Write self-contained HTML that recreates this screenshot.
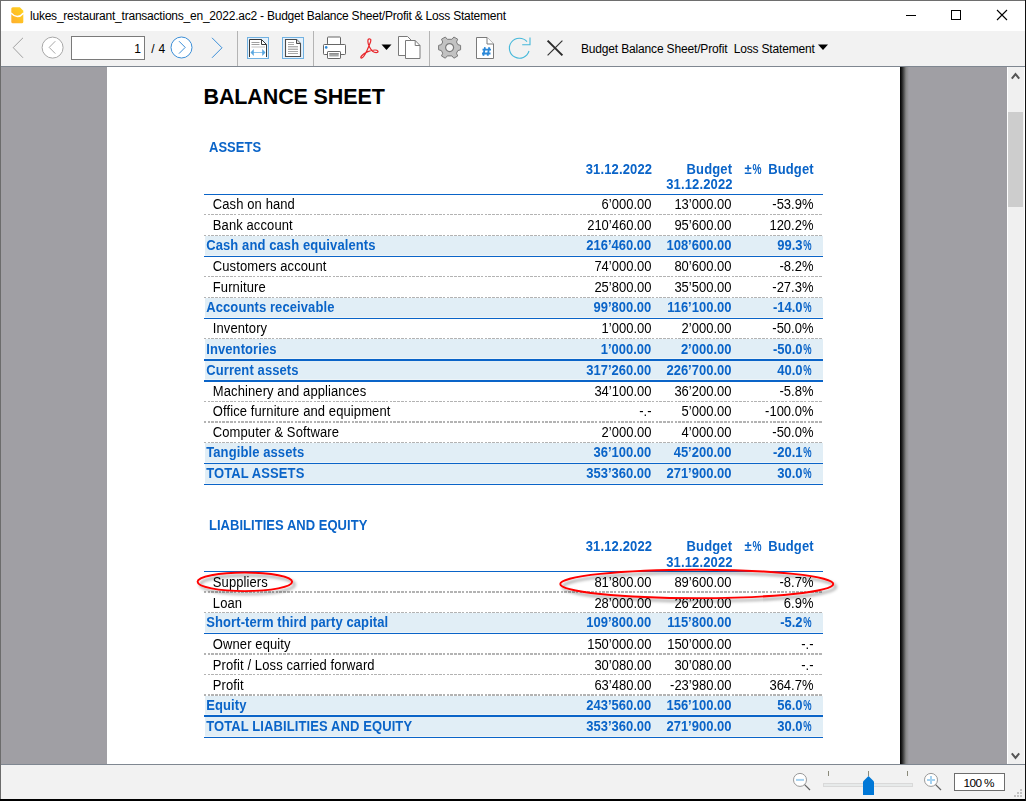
<!DOCTYPE html>
<html><head><meta charset="utf-8">
<style>
html,body{margin:0;padding:0;}
body{width:1026px;height:801px;position:relative;overflow:hidden;background:#000;font-family:"Liberation Sans",sans-serif;}
.t{position:absolute;white-space:pre;}
.dot{position:absolute;left:204px;width:619px;background:repeating-linear-gradient(to right,#b3b3b3 0px 2px,transparent 2px 3px,#b3b3b3 3px 6px,transparent 6px 7px,#b3b3b3 7px 10px,transparent 10px 11px,#b3b3b3 11px 14px,transparent 14px 15px,#b3b3b3 15px 17px,transparent 17px 19px);background-position:15px 0;}
</style></head><body>
<div id="win" style="position:absolute;left:0;top:0;width:1026px;height:799px;background:#fff;">
 <div style="position:absolute;left:0;top:0;width:1026px;height:1px;background:#6e6e6e"></div>
 <div style="position:absolute;left:0;top:0;width:1px;height:799px;background:#6c6c6c"></div>
 <div style="position:absolute;left:1025px;top:0;width:1px;height:801px;background:#111"></div>
 <div class="t" style="left:30px;top:8px;font-size:12px;letter-spacing:-0.225px;line-height:16px;color:#000;">lukes_restaurant_transactions_en_2022.ac2 - Budget Balance Sheet/Profit &amp; Loss Statement</div>
 <!-- toolbar -->
 <div style="position:absolute;left:1px;top:31px;width:1024px;height:35px;background:#f2f2f2"></div>
 <div style="position:absolute;left:1px;top:66px;width:1024px;height:1px;background:#7f8791"></div>
 <div style="position:absolute;left:71px;top:36px;width:74px;height:24px;box-sizing:border-box;border:1px solid #7a7a7a;background:#fff"></div>
 <div class="t" style="right:885.2px;top:42px;font-size:12px;line-height:15px;color:#000;">1</div>
 <div class="t" style="left:151.3px;top:42px;font-size:12px;letter-spacing:0.3px;line-height:15px;color:#000;">/ 4</div>
 <div class="t" style="left:581px;top:42px;font-size:12px;letter-spacing:-0.165px;line-height:15px;color:#000;">Budget Balance Sheet/Profit  Loss Statement</div>
 <!-- workspace -->
 <div style="position:absolute;left:1px;top:67px;width:1006px;height:697px;background:#a09fa4"></div>
 <div style="position:absolute;left:1007px;top:67px;width:1px;height:697px;background:#fff"></div>
 <div style="position:absolute;left:1008px;top:67px;width:16px;height:697px;background:#f0f0f0"></div>
 <div style="position:absolute;left:1008px;top:112px;width:15px;height:95px;background:#cdcdcd"></div>
 <div style="position:absolute;left:900px;top:67px;width:9px;height:697px;background:linear-gradient(to right,#000 0,#222 2px,#555 4px,#888 6px,#a09fa4 9px)"></div>
 <div id="page" style="position:absolute;left:107px;top:67px;width:793px;height:697px;background:#fff;overflow:hidden"></div>
 <div style="position:absolute;left:0;top:0;width:1026px;height:801px;">
<div class="t" style="left:203.5px;top:83.55px;font-size:21.5px;line-height:26px;font-weight:700;color:#000;letter-spacing:-0.12px;">BALANCE SHEET</div>
<div class="t" style="left:209px;top:139.50px;font-size:13px;line-height:16px;font-weight:700;color:#0a64c8;transform:scaleY(1.08);transform-origin:0 12.50px;letter-spacing:0.03px">ASSETS</div>
<div class="t" style="right:373.79999999999995px;top:161.50px;font-size:13px;line-height:16px;font-weight:700;color:#0a64c8;transform:scaleY(1.08);transform-origin:0 12.50px;letter-spacing:0.15px">31.12.2022</div>
<div class="t" style="right:293.79999999999995px;top:161.50px;font-size:13px;line-height:16px;font-weight:700;color:#0a64c8;transform:scaleY(1.08);transform-origin:0 12.50px;letter-spacing:0.15px">Budget</div>
<div class="t" style="right:293.29999999999995px;top:176.50px;font-size:13px;line-height:16px;font-weight:700;color:#0a64c8;transform:scaleY(1.08);transform-origin:0 12.50px;letter-spacing:0.15px">31.12.2022</div>
<div class="t" style="right:264px;top:161.50px;font-size:13px;line-height:16px;font-weight:700;color:#0a64c8;transform:scaleY(1.08);transform-origin:0 12.50px;">±<span style="display:inline-block;transform:scaleX(0.78);transform-origin:100% 50%;margin-left:-1.2px">%</span></div>
<div class="t" style="right:212.20000000000005px;top:161.50px;font-size:13px;line-height:16px;font-weight:700;color:#0a64c8;transform:scaleY(1.08);transform-origin:0 12.50px;letter-spacing:0.15px">Budget</div>
<div style="position:absolute;left:205px;width:618px;top:236px;height:20px;background:linear-gradient(to bottom,#e1eef6 0,#e1eef6 calc(100% - 1px),#edf4f8 calc(100% - 1px))"></div>
<div style="position:absolute;left:205px;width:618px;top:298px;height:20px;background:linear-gradient(to bottom,#e1eef6 0,#e1eef6 calc(100% - 1px),#edf4f8 calc(100% - 1px))"></div>
<div style="position:absolute;left:205px;width:618px;top:339px;height:20px;background:linear-gradient(to bottom,#e1eef6 0,#e1eef6 calc(100% - 1px),#edf4f8 calc(100% - 1px))"></div>
<div style="position:absolute;left:205px;width:618px;top:361px;height:19px;background:linear-gradient(to bottom,#e1eef6 0,#e1eef6 calc(100% - 1px),#edf4f8 calc(100% - 1px))"></div>
<div style="position:absolute;left:205px;width:618px;top:443px;height:20px;background:linear-gradient(to bottom,#e1eef6 0,#e1eef6 calc(100% - 1px),#edf4f8 calc(100% - 1px))"></div>
<div style="position:absolute;left:205px;width:618px;top:464px;height:20px;background:linear-gradient(to bottom,#e1eef6 0,#e1eef6 calc(100% - 1px),#edf4f8 calc(100% - 1px))"></div>
<div style="position:absolute;left:204px;width:619px;top:194px;height:1px;background:#0a64c8"></div>
<div class="dot" style="top:214px;height:1px"></div>
<div class="dot" style="top:235px;height:1px"></div>
<div style="position:absolute;left:204px;width:619px;top:256px;height:1px;background:#0a64c8"></div>
<div class="dot" style="top:276px;height:1px"></div>
<div class="dot" style="top:297px;height:1px"></div>
<div style="position:absolute;left:204px;width:619px;top:318px;height:1px;background:#0a64c8"></div>
<div class="dot" style="top:338px;height:1px"></div>
<div style="position:absolute;left:204px;width:619px;top:359px;height:2px;background:#0a64c8"></div>
<div style="position:absolute;left:204px;width:619px;top:380px;height:2px;background:#0a64c8"></div>
<div class="dot" style="top:401px;height:1px"></div>
<div class="dot" style="top:421px;height:2px"></div>
<div class="dot" style="top:442px;height:1px"></div>
<div style="position:absolute;left:204px;width:619px;top:463px;height:1px;background:#0a64c8"></div>
<div style="position:absolute;left:204px;width:619px;top:484px;height:1px;background:#0a64c8"></div>
<div class="t" style="left:212.8px;top:196.50px;font-size:13px;line-height:16px;font-weight:400;color:#000;transform:scaleY(1.08);transform-origin:0 12.50px;letter-spacing:0.1px">Cash on hand</div>
<div class="t" style="right:374.5px;top:196.50px;font-size:13px;line-height:16px;font-weight:400;color:#000;transform:scaleY(1.08);transform-origin:0 12.50px;letter-spacing:0px">6’000.00</div>
<div class="t" style="right:294.5px;top:196.50px;font-size:13px;line-height:16px;font-weight:400;color:#000;transform:scaleY(1.08);transform-origin:0 12.50px;letter-spacing:0px">13’000.00</div>
<div class="t" style="right:212.5px;top:196.50px;font-size:13px;line-height:16px;font-weight:400;color:#000;transform:scaleY(1.08);transform-origin:0 12.50px;letter-spacing:0px">-53.9%</div>
<div class="t" style="left:212.8px;top:217.50px;font-size:13px;line-height:16px;font-weight:400;color:#000;transform:scaleY(1.08);transform-origin:0 12.50px;letter-spacing:0.1px">Bank account</div>
<div class="t" style="right:374.5px;top:217.50px;font-size:13px;line-height:16px;font-weight:400;color:#000;transform:scaleY(1.08);transform-origin:0 12.50px;letter-spacing:0px">210’460.00</div>
<div class="t" style="right:294.5px;top:217.50px;font-size:13px;line-height:16px;font-weight:400;color:#000;transform:scaleY(1.08);transform-origin:0 12.50px;letter-spacing:0px">95’600.00</div>
<div class="t" style="right:212.5px;top:217.50px;font-size:13px;line-height:16px;font-weight:400;color:#000;transform:scaleY(1.08);transform-origin:0 12.50px;letter-spacing:0px">120.2%</div>
<div class="t" style="left:206.2px;top:237.50px;font-size:13px;line-height:16px;font-weight:700;color:#0a64c8;transform:scaleY(1.08);transform-origin:0 12.50px;letter-spacing:0.1px">Cash and cash equivalents</div>
<div class="t" style="right:374.70000000000005px;top:237.50px;font-size:13px;line-height:16px;font-weight:700;color:#0a64c8;transform:scaleY(1.08);transform-origin:0 12.50px;letter-spacing:0px">216’460.00</div>
<div class="t" style="right:294.5px;top:237.50px;font-size:13px;line-height:16px;font-weight:700;color:#0a64c8;transform:scaleY(1.08);transform-origin:0 12.50px;letter-spacing:0px">108’600.00</div>
<div class="t" style="right:214.5px;top:237.50px;font-size:13px;line-height:16px;font-weight:700;color:#0a64c8;transform:scaleY(1.08);transform-origin:0 12.50px;letter-spacing:0px">99.3<span style="display:inline-block;transform:scaleX(0.72);transform-origin:100% 50%;margin-left:-2.6px">%</span></div>
<div class="t" style="left:212.8px;top:258.50px;font-size:13px;line-height:16px;font-weight:400;color:#000;transform:scaleY(1.08);transform-origin:0 12.50px;letter-spacing:0.1px">Customers account</div>
<div class="t" style="right:374.5px;top:258.50px;font-size:13px;line-height:16px;font-weight:400;color:#000;transform:scaleY(1.08);transform-origin:0 12.50px;letter-spacing:0px">74’000.00</div>
<div class="t" style="right:294.5px;top:258.50px;font-size:13px;line-height:16px;font-weight:400;color:#000;transform:scaleY(1.08);transform-origin:0 12.50px;letter-spacing:0px">80’600.00</div>
<div class="t" style="right:212.5px;top:258.50px;font-size:13px;line-height:16px;font-weight:400;color:#000;transform:scaleY(1.08);transform-origin:0 12.50px;letter-spacing:0px">-8.2%</div>
<div class="t" style="left:212.8px;top:279.50px;font-size:13px;line-height:16px;font-weight:400;color:#000;transform:scaleY(1.08);transform-origin:0 12.50px;letter-spacing:0.1px">Furniture</div>
<div class="t" style="right:374.5px;top:279.50px;font-size:13px;line-height:16px;font-weight:400;color:#000;transform:scaleY(1.08);transform-origin:0 12.50px;letter-spacing:0px">25’800.00</div>
<div class="t" style="right:294.5px;top:279.50px;font-size:13px;line-height:16px;font-weight:400;color:#000;transform:scaleY(1.08);transform-origin:0 12.50px;letter-spacing:0px">35’500.00</div>
<div class="t" style="right:212.5px;top:279.50px;font-size:13px;line-height:16px;font-weight:400;color:#000;transform:scaleY(1.08);transform-origin:0 12.50px;letter-spacing:0px">-27.3%</div>
<div class="t" style="left:206.2px;top:299.50px;font-size:13px;line-height:16px;font-weight:700;color:#0a64c8;transform:scaleY(1.08);transform-origin:0 12.50px;letter-spacing:0.1px">Accounts receivable</div>
<div class="t" style="right:374.70000000000005px;top:299.50px;font-size:13px;line-height:16px;font-weight:700;color:#0a64c8;transform:scaleY(1.08);transform-origin:0 12.50px;letter-spacing:0px">99’800.00</div>
<div class="t" style="right:294.5px;top:299.50px;font-size:13px;line-height:16px;font-weight:700;color:#0a64c8;transform:scaleY(1.08);transform-origin:0 12.50px;letter-spacing:0px">116’100.00</div>
<div class="t" style="right:214.5px;top:299.50px;font-size:13px;line-height:16px;font-weight:700;color:#0a64c8;transform:scaleY(1.08);transform-origin:0 12.50px;letter-spacing:0px">-14.0<span style="display:inline-block;transform:scaleX(0.72);transform-origin:100% 50%;margin-left:-2.6px">%</span></div>
<div class="t" style="left:212.8px;top:320.50px;font-size:13px;line-height:16px;font-weight:400;color:#000;transform:scaleY(1.08);transform-origin:0 12.50px;letter-spacing:0.1px">Inventory</div>
<div class="t" style="right:374.5px;top:320.50px;font-size:13px;line-height:16px;font-weight:400;color:#000;transform:scaleY(1.08);transform-origin:0 12.50px;letter-spacing:0px">1’000.00</div>
<div class="t" style="right:294.5px;top:320.50px;font-size:13px;line-height:16px;font-weight:400;color:#000;transform:scaleY(1.08);transform-origin:0 12.50px;letter-spacing:0px">2’000.00</div>
<div class="t" style="right:212.5px;top:320.50px;font-size:13px;line-height:16px;font-weight:400;color:#000;transform:scaleY(1.08);transform-origin:0 12.50px;letter-spacing:0px">-50.0%</div>
<div class="t" style="left:206.2px;top:341.50px;font-size:13px;line-height:16px;font-weight:700;color:#0a64c8;transform:scaleY(1.08);transform-origin:0 12.50px;letter-spacing:0.1px">Inventories</div>
<div class="t" style="right:374.70000000000005px;top:341.50px;font-size:13px;line-height:16px;font-weight:700;color:#0a64c8;transform:scaleY(1.08);transform-origin:0 12.50px;letter-spacing:0px">1’000.00</div>
<div class="t" style="right:294.5px;top:341.50px;font-size:13px;line-height:16px;font-weight:700;color:#0a64c8;transform:scaleY(1.08);transform-origin:0 12.50px;letter-spacing:0px">2’000.00</div>
<div class="t" style="right:214.5px;top:341.50px;font-size:13px;line-height:16px;font-weight:700;color:#0a64c8;transform:scaleY(1.08);transform-origin:0 12.50px;letter-spacing:0px">-50.0<span style="display:inline-block;transform:scaleX(0.72);transform-origin:100% 50%;margin-left:-2.6px">%</span></div>
<div class="t" style="left:206.2px;top:362.50px;font-size:13px;line-height:16px;font-weight:700;color:#0a64c8;transform:scaleY(1.08);transform-origin:0 12.50px;letter-spacing:0.1px">Current assets</div>
<div class="t" style="right:374.70000000000005px;top:362.50px;font-size:13px;line-height:16px;font-weight:700;color:#0a64c8;transform:scaleY(1.08);transform-origin:0 12.50px;letter-spacing:0px">317’260.00</div>
<div class="t" style="right:294.5px;top:362.50px;font-size:13px;line-height:16px;font-weight:700;color:#0a64c8;transform:scaleY(1.08);transform-origin:0 12.50px;letter-spacing:0px">226’700.00</div>
<div class="t" style="right:214.5px;top:362.50px;font-size:13px;line-height:16px;font-weight:700;color:#0a64c8;transform:scaleY(1.08);transform-origin:0 12.50px;letter-spacing:0px">40.0<span style="display:inline-block;transform:scaleX(0.72);transform-origin:100% 50%;margin-left:-2.6px">%</span></div>
<div class="t" style="left:212.8px;top:383.50px;font-size:13px;line-height:16px;font-weight:400;color:#000;transform:scaleY(1.08);transform-origin:0 12.50px;letter-spacing:0.1px">Machinery and appliances</div>
<div class="t" style="right:374.5px;top:383.50px;font-size:13px;line-height:16px;font-weight:400;color:#000;transform:scaleY(1.08);transform-origin:0 12.50px;letter-spacing:0px">34’100.00</div>
<div class="t" style="right:294.5px;top:383.50px;font-size:13px;line-height:16px;font-weight:400;color:#000;transform:scaleY(1.08);transform-origin:0 12.50px;letter-spacing:0px">36’200.00</div>
<div class="t" style="right:212.5px;top:383.50px;font-size:13px;line-height:16px;font-weight:400;color:#000;transform:scaleY(1.08);transform-origin:0 12.50px;letter-spacing:0px">-5.8%</div>
<div class="t" style="left:212.8px;top:403.50px;font-size:13px;line-height:16px;font-weight:400;color:#000;transform:scaleY(1.08);transform-origin:0 12.50px;letter-spacing:0.1px">Office furniture and equipment</div>
<div class="t" style="right:374.5px;top:403.50px;font-size:13px;line-height:16px;font-weight:400;color:#000;transform:scaleY(1.08);transform-origin:0 12.50px;letter-spacing:0px">-.-</div>
<div class="t" style="right:294.5px;top:403.50px;font-size:13px;line-height:16px;font-weight:400;color:#000;transform:scaleY(1.08);transform-origin:0 12.50px;letter-spacing:0px">5’000.00</div>
<div class="t" style="right:212.5px;top:403.50px;font-size:13px;line-height:16px;font-weight:400;color:#000;transform:scaleY(1.08);transform-origin:0 12.50px;letter-spacing:0px">-100.0%</div>
<div class="t" style="left:212.8px;top:424.50px;font-size:13px;line-height:16px;font-weight:400;color:#000;transform:scaleY(1.08);transform-origin:0 12.50px;letter-spacing:0.1px">Computer &amp; Software</div>
<div class="t" style="right:374.5px;top:424.50px;font-size:13px;line-height:16px;font-weight:400;color:#000;transform:scaleY(1.08);transform-origin:0 12.50px;letter-spacing:0px">2’000.00</div>
<div class="t" style="right:294.5px;top:424.50px;font-size:13px;line-height:16px;font-weight:400;color:#000;transform:scaleY(1.08);transform-origin:0 12.50px;letter-spacing:0px">4’000.00</div>
<div class="t" style="right:212.5px;top:424.50px;font-size:13px;line-height:16px;font-weight:400;color:#000;transform:scaleY(1.08);transform-origin:0 12.50px;letter-spacing:0px">-50.0%</div>
<div class="t" style="left:206.2px;top:444.50px;font-size:13px;line-height:16px;font-weight:700;color:#0a64c8;transform:scaleY(1.08);transform-origin:0 12.50px;letter-spacing:0.1px">Tangible assets</div>
<div class="t" style="right:374.70000000000005px;top:444.50px;font-size:13px;line-height:16px;font-weight:700;color:#0a64c8;transform:scaleY(1.08);transform-origin:0 12.50px;letter-spacing:0px">36’100.00</div>
<div class="t" style="right:294.5px;top:444.50px;font-size:13px;line-height:16px;font-weight:700;color:#0a64c8;transform:scaleY(1.08);transform-origin:0 12.50px;letter-spacing:0px">45’200.00</div>
<div class="t" style="right:214.5px;top:444.50px;font-size:13px;line-height:16px;font-weight:700;color:#0a64c8;transform:scaleY(1.08);transform-origin:0 12.50px;letter-spacing:0px">-20.1<span style="display:inline-block;transform:scaleX(0.72);transform-origin:100% 50%;margin-left:-2.6px">%</span></div>
<div class="t" style="left:206.2px;top:465.50px;font-size:13px;line-height:16px;font-weight:700;color:#0a64c8;transform:scaleY(1.08);transform-origin:0 12.50px;letter-spacing:0.1px">TOTAL ASSETS</div>
<div class="t" style="right:374.70000000000005px;top:465.50px;font-size:13px;line-height:16px;font-weight:700;color:#0a64c8;transform:scaleY(1.08);transform-origin:0 12.50px;letter-spacing:0px">353’360.00</div>
<div class="t" style="right:294.5px;top:465.50px;font-size:13px;line-height:16px;font-weight:700;color:#0a64c8;transform:scaleY(1.08);transform-origin:0 12.50px;letter-spacing:0px">271’900.00</div>
<div class="t" style="right:214.5px;top:465.50px;font-size:13px;line-height:16px;font-weight:700;color:#0a64c8;transform:scaleY(1.08);transform-origin:0 12.50px;letter-spacing:0px">30.0<span style="display:inline-block;transform:scaleX(0.72);transform-origin:100% 50%;margin-left:-2.6px">%</span></div>
<div class="t" style="left:209px;top:517.50px;font-size:13px;line-height:16px;font-weight:700;color:#0a64c8;transform:scaleY(1.08);transform-origin:0 12.50px;letter-spacing:0.03px">LIABILITIES AND EQUITY</div>
<div class="t" style="right:373.79999999999995px;top:538.50px;font-size:13px;line-height:16px;font-weight:700;color:#0a64c8;transform:scaleY(1.08);transform-origin:0 12.50px;letter-spacing:0.15px">31.12.2022</div>
<div class="t" style="right:293.79999999999995px;top:538.50px;font-size:13px;line-height:16px;font-weight:700;color:#0a64c8;transform:scaleY(1.08);transform-origin:0 12.50px;letter-spacing:0.15px">Budget</div>
<div class="t" style="right:293.29999999999995px;top:554.50px;font-size:13px;line-height:16px;font-weight:700;color:#0a64c8;transform:scaleY(1.08);transform-origin:0 12.50px;letter-spacing:0.15px">31.12.2022</div>
<div class="t" style="right:264px;top:538.50px;font-size:13px;line-height:16px;font-weight:700;color:#0a64c8;transform:scaleY(1.08);transform-origin:0 12.50px;">±<span style="display:inline-block;transform:scaleX(0.78);transform-origin:100% 50%;margin-left:-1.2px">%</span></div>
<div class="t" style="right:212.20000000000005px;top:538.50px;font-size:13px;line-height:16px;font-weight:700;color:#0a64c8;transform:scaleY(1.08);transform-origin:0 12.50px;letter-spacing:0.15px">Budget</div>
<div style="position:absolute;left:205px;width:618px;top:613px;height:20px;background:linear-gradient(to bottom,#e1eef6 0,#e1eef6 calc(100% - 1px),#edf4f8 calc(100% - 1px))"></div>
<div style="position:absolute;left:205px;width:618px;top:696px;height:19px;background:linear-gradient(to bottom,#e1eef6 0,#e1eef6 calc(100% - 1px),#edf4f8 calc(100% - 1px))"></div>
<div style="position:absolute;left:205px;width:618px;top:717px;height:20px;background:linear-gradient(to bottom,#e1eef6 0,#e1eef6 calc(100% - 1px),#edf4f8 calc(100% - 1px))"></div>
<div style="position:absolute;left:204px;width:619px;top:571px;height:1px;background:#0a64c8"></div>
<div class="dot" style="top:591px;height:2px"></div>
<div class="dot" style="top:612px;height:1px"></div>
<div style="position:absolute;left:204px;width:619px;top:633px;height:1px;background:#0a64c8"></div>
<div class="dot" style="top:653px;height:2px"></div>
<div class="dot" style="top:674px;height:1px"></div>
<div class="dot" style="top:694px;height:2px"></div>
<div style="position:absolute;left:204px;width:619px;top:715px;height:2px;background:#0a64c8"></div>
<div style="position:absolute;left:204px;width:619px;top:737px;height:1px;background:#0a64c8"></div>
<div class="t" style="left:212.8px;top:574.50px;font-size:13px;line-height:16px;font-weight:400;color:#000;transform:scaleY(1.08);transform-origin:0 12.50px;letter-spacing:0.1px">Suppliers</div>
<div class="t" style="right:374.5px;top:574.50px;font-size:13px;line-height:16px;font-weight:400;color:#000;transform:scaleY(1.08);transform-origin:0 12.50px;letter-spacing:0px">81’800.00</div>
<div class="t" style="right:294.5px;top:574.50px;font-size:13px;line-height:16px;font-weight:400;color:#000;transform:scaleY(1.08);transform-origin:0 12.50px;letter-spacing:0px">89’600.00</div>
<div class="t" style="right:212.5px;top:574.50px;font-size:13px;line-height:16px;font-weight:400;color:#000;transform:scaleY(1.08);transform-origin:0 12.50px;letter-spacing:0px">-8.7%</div>
<div class="t" style="left:212.8px;top:595.50px;font-size:13px;line-height:16px;font-weight:400;color:#000;transform:scaleY(1.08);transform-origin:0 12.50px;letter-spacing:0.1px">Loan</div>
<div class="t" style="right:374.5px;top:595.50px;font-size:13px;line-height:16px;font-weight:400;color:#000;transform:scaleY(1.08);transform-origin:0 12.50px;letter-spacing:0px">28’000.00</div>
<div class="t" style="right:294.5px;top:595.50px;font-size:13px;line-height:16px;font-weight:400;color:#000;transform:scaleY(1.08);transform-origin:0 12.50px;letter-spacing:0px">26’200.00</div>
<div class="t" style="right:212.5px;top:595.50px;font-size:13px;line-height:16px;font-weight:400;color:#000;transform:scaleY(1.08);transform-origin:0 12.50px;letter-spacing:0px">6.9%</div>
<div class="t" style="left:206.2px;top:614.50px;font-size:13px;line-height:16px;font-weight:700;color:#0a64c8;transform:scaleY(1.08);transform-origin:0 12.50px;letter-spacing:0.1px">Short-term third party capital</div>
<div class="t" style="right:374.70000000000005px;top:614.50px;font-size:13px;line-height:16px;font-weight:700;color:#0a64c8;transform:scaleY(1.08);transform-origin:0 12.50px;letter-spacing:0px">109’800.00</div>
<div class="t" style="right:294.5px;top:614.50px;font-size:13px;line-height:16px;font-weight:700;color:#0a64c8;transform:scaleY(1.08);transform-origin:0 12.50px;letter-spacing:0px">115’800.00</div>
<div class="t" style="right:214.5px;top:614.50px;font-size:13px;line-height:16px;font-weight:700;color:#0a64c8;transform:scaleY(1.08);transform-origin:0 12.50px;letter-spacing:0px">-5.2<span style="display:inline-block;transform:scaleX(0.72);transform-origin:100% 50%;margin-left:-2.6px">%</span></div>
<div class="t" style="left:212.8px;top:636.50px;font-size:13px;line-height:16px;font-weight:400;color:#000;transform:scaleY(1.08);transform-origin:0 12.50px;letter-spacing:0.1px">Owner equity</div>
<div class="t" style="right:374.5px;top:636.50px;font-size:13px;line-height:16px;font-weight:400;color:#000;transform:scaleY(1.08);transform-origin:0 12.50px;letter-spacing:0px">150’000.00</div>
<div class="t" style="right:294.5px;top:636.50px;font-size:13px;line-height:16px;font-weight:400;color:#000;transform:scaleY(1.08);transform-origin:0 12.50px;letter-spacing:0px">150’000.00</div>
<div class="t" style="right:212.5px;top:636.50px;font-size:13px;line-height:16px;font-weight:400;color:#000;transform:scaleY(1.08);transform-origin:0 12.50px;letter-spacing:0px">-.-</div>
<div class="t" style="left:212.8px;top:657.50px;font-size:13px;line-height:16px;font-weight:400;color:#000;transform:scaleY(1.08);transform-origin:0 12.50px;letter-spacing:0.1px">Profit / Loss carried forward</div>
<div class="t" style="right:374.5px;top:657.50px;font-size:13px;line-height:16px;font-weight:400;color:#000;transform:scaleY(1.08);transform-origin:0 12.50px;letter-spacing:0px">30’080.00</div>
<div class="t" style="right:294.5px;top:657.50px;font-size:13px;line-height:16px;font-weight:400;color:#000;transform:scaleY(1.08);transform-origin:0 12.50px;letter-spacing:0px">30’080.00</div>
<div class="t" style="right:212.5px;top:657.50px;font-size:13px;line-height:16px;font-weight:400;color:#000;transform:scaleY(1.08);transform-origin:0 12.50px;letter-spacing:0px">-.-</div>
<div class="t" style="left:212.8px;top:677.50px;font-size:13px;line-height:16px;font-weight:400;color:#000;transform:scaleY(1.08);transform-origin:0 12.50px;letter-spacing:0.1px">Profit</div>
<div class="t" style="right:374.5px;top:677.50px;font-size:13px;line-height:16px;font-weight:400;color:#000;transform:scaleY(1.08);transform-origin:0 12.50px;letter-spacing:0px">63’480.00</div>
<div class="t" style="right:294.5px;top:677.50px;font-size:13px;line-height:16px;font-weight:400;color:#000;transform:scaleY(1.08);transform-origin:0 12.50px;letter-spacing:0px">-23’980.00</div>
<div class="t" style="right:212.5px;top:677.50px;font-size:13px;line-height:16px;font-weight:400;color:#000;transform:scaleY(1.08);transform-origin:0 12.50px;letter-spacing:0px">364.7%</div>
<div class="t" style="left:206.2px;top:697.50px;font-size:13px;line-height:16px;font-weight:700;color:#0a64c8;transform:scaleY(1.08);transform-origin:0 12.50px;letter-spacing:0.1px">Equity</div>
<div class="t" style="right:374.70000000000005px;top:697.50px;font-size:13px;line-height:16px;font-weight:700;color:#0a64c8;transform:scaleY(1.08);transform-origin:0 12.50px;letter-spacing:0px">243’560.00</div>
<div class="t" style="right:294.5px;top:697.50px;font-size:13px;line-height:16px;font-weight:700;color:#0a64c8;transform:scaleY(1.08);transform-origin:0 12.50px;letter-spacing:0px">156’100.00</div>
<div class="t" style="right:214.5px;top:697.50px;font-size:13px;line-height:16px;font-weight:700;color:#0a64c8;transform:scaleY(1.08);transform-origin:0 12.50px;letter-spacing:0px">56.0<span style="display:inline-block;transform:scaleX(0.72);transform-origin:100% 50%;margin-left:-2.6px">%</span></div>
<div class="t" style="left:206.2px;top:718.50px;font-size:13px;line-height:16px;font-weight:700;color:#0a64c8;transform:scaleY(1.08);transform-origin:0 12.50px;letter-spacing:0.1px">TOTAL LIABILITIES AND EQUITY</div>
<div class="t" style="right:374.70000000000005px;top:718.50px;font-size:13px;line-height:16px;font-weight:700;color:#0a64c8;transform:scaleY(1.08);transform-origin:0 12.50px;letter-spacing:0px">353’360.00</div>
<div class="t" style="right:294.5px;top:718.50px;font-size:13px;line-height:16px;font-weight:700;color:#0a64c8;transform:scaleY(1.08);transform-origin:0 12.50px;letter-spacing:0px">271’900.00</div>
<div class="t" style="right:214.5px;top:718.50px;font-size:13px;line-height:16px;font-weight:700;color:#0a64c8;transform:scaleY(1.08);transform-origin:0 12.50px;letter-spacing:0px">30.0<span style="display:inline-block;transform:scaleX(0.72);transform-origin:100% 50%;margin-left:-2.6px">%</span></div>

 </div>
 <!-- status bar -->
 <div style="position:absolute;left:1px;top:764px;width:1024px;height:1px;background:#7f8791"></div>
 <div style="position:absolute;left:1px;top:765px;width:1024px;height:34px;background:#f2f2f2"></div>
 <div style="position:absolute;left:954px;top:773px;width:51px;height:18px;box-sizing:border-box;border:1px solid #6d6d6d;background:#fff"></div>
 <div class="t" style="left:963.5px;top:776px;font-size:11.8px;letter-spacing:-0.6px;line-height:15px;color:#000;">100 %</div>
<svg style="position:absolute;left:11px;top:7px;" width="13" height="17" viewBox="0 0 13 17"><defs><linearGradient id="yg" x1="0" y1="1" x2="1" y2="0"><stop offset="0" stop-color="#ffad2e"/><stop offset="1" stop-color="#ffd41c"/></linearGradient></defs><path d="M1.5 0H8.5L12 3.5V14.5Q12 16 10.5 16H1.5Q0 16 0 14.5V1.5Q0 0 1.5 0Z" fill="url(#yg)" transform="translate(0.3,0.3)"/><path d="M0 5.9Q6.3 13.2 12.6 5.9" stroke="#fff" stroke-width="1.6" fill="none"/></svg>
<svg style="position:absolute;left:10px;top:36px;" width="16" height="24" viewBox="0 0 16 24"><path d="M13 1.8L3.2 11.6L13 21.8" stroke="#a0a0a0" stroke-width="1" fill="none"/></svg>
<svg style="position:absolute;left:41px;top:36px;" width="24" height="24" viewBox="0 0 24 24"><circle cx="11.6" cy="11.6" r="10.5" stroke="#a8a8a8" stroke-width="1" fill="#fff"/><path d="M14.3 5.2L8.2 11.4L14.3 17.6" stroke="#a8a8a8" stroke-width="1" fill="none"/></svg>
<svg style="position:absolute;left:170px;top:36px;" width="24" height="24" viewBox="0 0 24 24"><circle cx="11.5" cy="11.5" r="10.5" stroke="#3c8fd8" stroke-width="1" fill="#fff"/><path d="M9 5.2L15.2 11.4L9 17.6" stroke="#3c8fd8" stroke-width="1" fill="none"/></svg>
<svg style="position:absolute;left:208px;top:36px;" width="18" height="24" viewBox="0 0 18 24"><path d="M4 1.8L14 11.8L4 21.8" stroke="#3c8fd8" stroke-width="1" fill="none"/></svg>
<svg style="position:absolute;left:247px;top:37px;" width="22" height="22" viewBox="0 0 22 22"><rect x="0.5" y="0.5" width="21" height="21" fill="#e5f1fb" stroke="#72b2e2"/><path d="M2.5 21V2.5H14.5L19.5 7.5V21Z" fill="#fff"/><path d="M2.5 20V2.5H14.5L19.5 7.5V20" fill="none" stroke="#3a3a3a" stroke-width="1"/><path d="M14.5 2.5V7.5H19.5" fill="none" stroke="#3a3a3a" stroke-width="1"/><path d="M4.5 5.5H12.5M4.5 7.5H12.5" stroke="#a0a0a0"/><path d="M4.5 10H18" stroke="#d6d6d6" stroke-width="1.5"/><path d="M5 15.5H17" stroke="#8ec3ea" stroke-width="1"/><path d="M3.5 15.5L6.8 12V19Z M18.5 15.5L15.2 12V19Z" fill="#5aa7e0"/></svg>
<svg style="position:absolute;left:282px;top:37px;" width="22" height="22" viewBox="0 0 22 22"><rect x="0.5" y="0.5" width="21" height="21" fill="#e5f1fb" stroke="#72b2e2"/><path d="M3.5 2.5H14.5L18.5 6.5V19.5H3.5Z" fill="#fff" stroke="#4a4a4a" stroke-width="1.1"/><path d="M14.5 2.5V6.5H18.5" fill="#ddd" stroke="#4a4a4a" stroke-width="1"/><path d="M6 5.5H12M6 7.5H12M6 14.5H16M6 16.5H16" stroke="#a8a8a8"/><rect x="6" y="9" width="10" height="4" fill="#dcdcdc"/><path d="M6 9.5H16M6 12.5H16" stroke="#b0b0b0"/></svg>
<div style="position:absolute;left:237px;top:31px;width:1px;height:35px;background:#b4b4b4"></div>
<div style="position:absolute;left:313px;top:31px;width:1px;height:35px;background:#b4b4b4"></div>
<div style="position:absolute;left:429px;top:31px;width:1px;height:35px;background:#b4b4b4"></div>
<svg style="position:absolute;left:322px;top:35px;" width="26" height="26" viewBox="0 0 26 26"><rect x="5.5" y="2" width="13" height="7.5" rx="0.6" fill="#fff" stroke="#666"/><rect x="1.5" y="9.5" width="22" height="10" rx="0.8" fill="#fff" stroke="#666"/><circle cx="4.2" cy="12.4" r="1.3" fill="#2b88d8"/><rect x="5.5" y="16.5" width="13" height="7" rx="0.6" fill="#fff" stroke="#666"/><rect x="7.3" y="18.3" width="9.4" height="3.2" fill="#a4a6a6"/><path d="M7.3 18.6H16.7" stroke="#888"/></svg>
<svg style="position:absolute;left:358px;top:37px;" width="22" height="22" viewBox="0 0 22 22"><path d="M12 2C9 1 9.5 6 11.5 10C13 13 16 16 19 15.5C21 15 20 13 17 13C12 13 6 16 3.5 19C1.5 21.5 4 22 6 19C8 16 11 9 12.5 5C13 3 13 2 12 2Z" fill="none" stroke="#e8262b" stroke-width="1.2"/></svg>
<svg style="position:absolute;left:381px;top:43px;" width="11" height="8" viewBox="0 0 11 8"><path d="M0.5 1.5H10.5L5.5 7Z" fill="#000"/></svg>
<svg style="position:absolute;left:397px;top:35px;" width="26" height="26" viewBox="0 0 26 26"><path d="M1.5 1.5H10.5L14 5V20.5H1.5Z" fill="#fff" stroke="#7a7a7a"/><path d="M8.5 5.5H18.2L23 10.5V23.5H8.5Z" fill="#fff" stroke="#7a7a7a"/><path d="M18.2 5.5V10.5H23" fill="none" stroke="#7a7a7a"/></svg>
<svg style="position:absolute;left:437px;top:35px;" width="26" height="26" viewBox="0 0 26 26"><g transform="translate(12.6,12.6) rotate(90)"><path d="M-2.2 -11H2.2L3 -8.2L5.6 -6.9L8.4 -8.1L10.6 -4.3L8.3 -2.3V2.3L10.6 4.3L8.4 8.1L5.6 6.9L3 8.2L2.2 11H-2.2L-3 8.2L-5.6 6.9L-8.4 8.1L-10.6 4.3L-8.3 2.3V-2.3L-10.6 -4.3L-8.4 -8.1L-5.6 -6.9L-3 -8.2Z" fill="#c2c2c2" stroke="#7a7a7a" stroke-width="1"/><circle r="4" fill="#f4f4f4" stroke="#7a7a7a" stroke-width="1.2"/></g></svg>
<svg style="position:absolute;left:476px;top:36px;" width="19" height="24" viewBox="0 0 19 24"><path d="M0.5 1.5H11L17.5 8V22.5H0.5Z" fill="#fff" stroke="#7a7a7a"/><path d="M11 1.5V8H17.5" fill="#fff" stroke="#7a7a7a"/><path d="M9 11.3L7.3 19.8M13.3 11.3L11.6 19.8M6.5 13.7H15M6 17.5H14.5" stroke="#2b88d8" stroke-width="1.8" fill="none"/></svg>
<svg style="position:absolute;left:507px;top:36px;" width="25" height="24" viewBox="0 0 25 24"><path d="M22 15A10 10 0 1 1 20 5.7" fill="none" stroke="#45b8da" stroke-width="1.1"/><path d="M15.2 8.7H23V1.4" fill="none" stroke="#45b8da" stroke-width="1.1"/></svg>
<svg style="position:absolute;left:546px;top:39px;" width="18" height="18" viewBox="0 0 18 18"><path d="M1.6 1.6L16.4 16.4" stroke="#2a2a2a" stroke-width="2"/><path d="M16.4 1.6L1.6 16.4" stroke="#333" stroke-width="1.2"/></svg>
<svg style="position:absolute;left:818px;top:44px;" width="11" height="7" viewBox="0 0 11 7"><path d="M0 0.5H10L5 6Z" fill="#000"/></svg>
<svg style="position:absolute;left:0;top:0" width="1026" height="801" viewBox="0 0 1026 801"><defs><filter id="sh" x="-20%" y="-50%" width="140%" height="200%"><feDropShadow dx="2.6" dy="2.8" stdDeviation="1.4" flood-color="#000" flood-opacity="0.42"/></filter></defs><ellipse cx="244.85" cy="581.8" rx="47.3" ry="9.3" fill="none" stroke="#f00" stroke-width="1.9" filter="url(#sh)"/><ellipse cx="696.75" cy="583.95" rx="136.5" ry="14.2" fill="none" stroke="#f00" stroke-width="1.9" filter="url(#sh)"/></svg>
<div style="position:absolute;left:906px;top:15px;width:10px;height:1px;background:#000"></div>
<div style="position:absolute;left:951px;top:10px;width:10px;height:10px;box-sizing:border-box;border:1px solid #000"></div>
<svg style="position:absolute;left:996px;top:9px;" width="12" height="12" viewBox="0 0 12 12"><path d="M1 1L11 11M11 1L1 11" stroke="#000" stroke-width="1.1"/></svg>
<svg style="position:absolute;left:1009px;top:71px;" width="13" height="10" viewBox="0 0 13 10"><path d="M2.8 7.6L6.5 3L10.2 7.6" fill="none" stroke="#555" stroke-width="2"/></svg>
<svg style="position:absolute;left:1009px;top:751px;" width="13" height="10" viewBox="0 0 13 10"><path d="M2.8 2.4L6.5 7L10.2 2.4" fill="none" stroke="#555" stroke-width="2"/></svg>
<div style="position:absolute;left:1020px;top:789px;width:2px;height:2px;background:#c2c2c2"></div>
<div style="position:absolute;left:1017px;top:792px;width:2px;height:2px;background:#c2c2c2"></div>
<div style="position:absolute;left:1020px;top:792px;width:2px;height:2px;background:#c2c2c2"></div>
<div style="position:absolute;left:1014px;top:795px;width:2px;height:2px;background:#c2c2c2"></div>
<div style="position:absolute;left:1017px;top:795px;width:2px;height:2px;background:#c2c2c2"></div>
<div style="position:absolute;left:1020px;top:795px;width:2px;height:2px;background:#c2c2c2"></div>
<svg style="position:absolute;left:790px;top:770px;" width="22" height="22" viewBox="0 0 22 22"><circle cx="10" cy="9.9" r="6.5" fill="#fff" stroke="#999" stroke-width="1"/><path d="M14.6 14.6L20 20" stroke="#666" stroke-width="1.2"/><path d="M6 9.9H14" stroke="#a6d2f0" stroke-width="2"/></svg>
<svg style="position:absolute;left:921px;top:770px;" width="22" height="22" viewBox="0 0 22 22"><circle cx="10" cy="9.9" r="6.5" fill="#fff" stroke="#999" stroke-width="1"/><path d="M14.6 14.6L20 20" stroke="#666" stroke-width="1.2"/><path d="M6 9.9H14M10 5.9V13.9" stroke="#a6d2f0" stroke-width="2"/></svg>
<div style="position:absolute;left:823px;top:783px;width:90px;height:4px;background:#e7eaea;border:1px solid #d9d9d9;box-sizing:border-box"></div>
<div style="position:absolute;left:828px;top:771px;width:1px;height:5px;background:#8a8a7a"></div>
<div style="position:absolute;left:868px;top:771px;width:1px;height:5px;background:#8a8a7a"></div>
<div style="position:absolute;left:907px;top:771px;width:1px;height:5px;background:#8a8a7a"></div>
<svg style="position:absolute;left:862px;top:775px;" width="13" height="21" viewBox="0 0 13 21"><path d="M1 20V6.5L6.5 1L12 6.5V20Z" fill="#0078d7"/></svg>

</div>
</body></html>
